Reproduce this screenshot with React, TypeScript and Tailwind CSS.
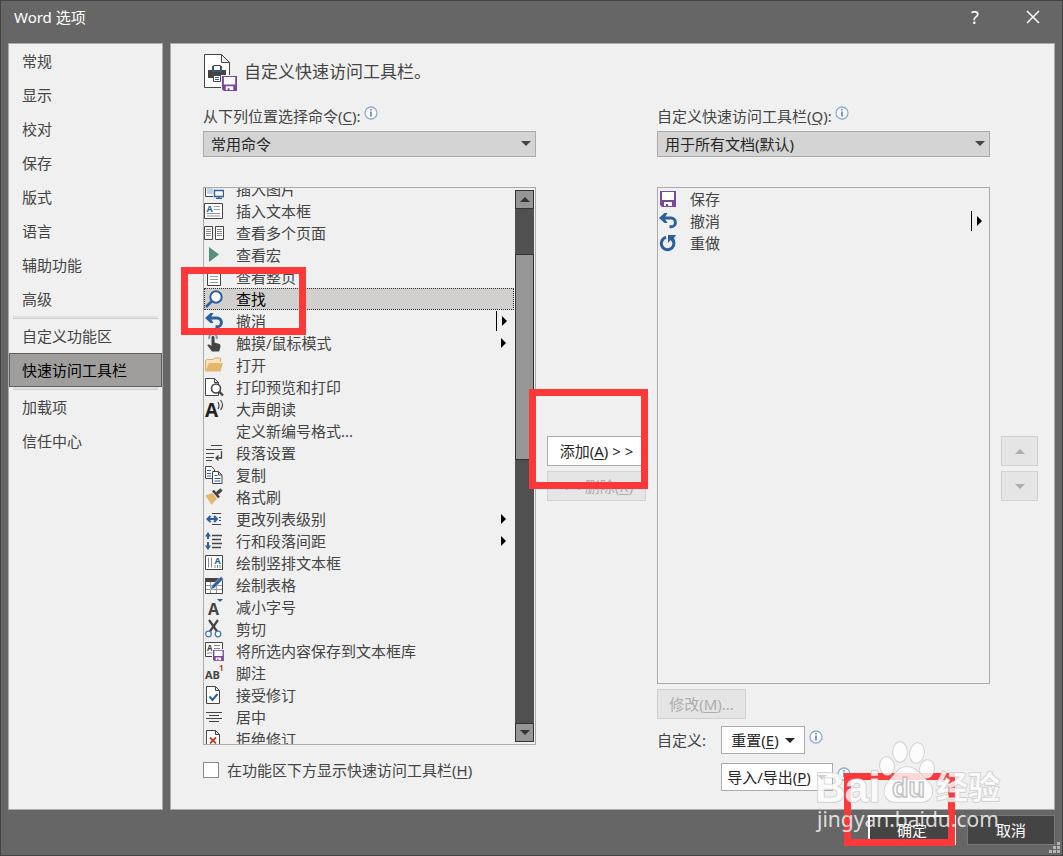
import React, { useState } from 'react';

const INK = '#444444';
const BLUE = '#2b5f9e';
const PURPLE = '#7b479d';

const Icon = ({ children }: { children?: React.ReactNode }) => (
  <svg width="20" height="20" viewBox="0 0 20 20" fill="none" className="shrink-0" aria-hidden="true">
    {children}
  </svg>
);

const Letter = ({ x, y, size, fill = INK, children }: { x: number; y: number; size: number; fill?: string; children: string }) => (
  <text x={x} y={y} fontSize={size} fontWeight="700" fill={fill} fontFamily="'Open Sans', sans-serif">{children}</text>
);

const Floppy = ({ transform }: { transform?: string }) => (
  <g transform={transform}>
    <path d="M0 0h16v16H2l-2-2z" fill={PURPLE} />
    <path d="M2 1h12v8H2zM4 11h8v4H4z" fill="#fff" />
    <path d="M6 13h2v2H6z" fill={PURPLE} />
  </g>
);

const Undo = () => (
  <>
    <path d="M4 7h9a4.300 4.300 0 0 1 0 8.800h-1.500" stroke={BLUE} strokeWidth="3" />
    <path d="M1 7l5.500-5h3L6.500 7l3 5h-3z" fill={BLUE} />
  </>
);

const Page = () => <path d="M3.5 1.5h9l4 4v13h-13z M12.5 1.5v4h4" fill="#fff" stroke={INK} />;

const icons: Record<string, React.ReactNode> = {
  picture: (
    <>
      <path d="M1.5 3.5h15v14H1.5z" fill="#fff" stroke={INK} />
      <path d="M3 5h6v10H3z" fill="#c3d3e8" />
      <path d="M9 9h11v11H9z" fill="#efefef" />
      <path d="M10.5 11.5h9v6h-9z" fill="#fff" stroke={BLUE} strokeWidth="1.4" />
      <path d="M15 17v2M12 19.5h6" stroke={BLUE} strokeWidth="1.4" />
    </>
  ),
  textbox: (
    <>
      <path d="M.5 2.5h18v15H.5z" fill="#fff" stroke={INK} />
      <Letter x={2.5} y={11} size={9} fill={BLUE}>A</Letter>
      <path d="M10 5.500h6M10 8.500h6M3 12.500h13M3 15h13" stroke="#999" />
    </>
  ),
  pages: (
    <>
      <path d="M.5 3.500h8v13H.500zM11.500 3.500h8v13h-8z" fill="#fff" stroke={INK} />
      <path d="M2 6.500h5M2 8.500h5M2 10.500h5M2 12.500h5M13 6.500h5M13 8.500h5M13 10.500h5M13 12.500h5" stroke="#888" />
    </>
  ),
  macro: <path d="M5 2l10 7.500-10 7.500z" fill="#569078" />,
  page: (
    <>
      <path d="M3.500 1.500h13v17h-13z" fill="#fff" stroke={INK} />
      <path d="M6 6.500h8M6 9.500h8M6 12.500h8M6 15.500h8" stroke="#999" />
    </>
  ),
  find: (
    <>
      <circle cx="12" cy="8" r="5.700" fill="#fff" stroke={BLUE} strokeWidth="2" />
      <path d="M8 12l-6 6" stroke={BLUE} strokeWidth="2.600" />
    </>
  ),
  undo: <Undo />,
  redo: (
    <>
      <path d="M8 4.300A6.300 6.300 0 1 0 15.200 7.500" stroke={BLUE} strokeWidth="3" />
      <path d="M10 2h8l-2 3 1 3-3 1-1.500-2-2.500 3z" fill={BLUE} />
    </>
  ),
  touch: (
    <>
      <path d="M5.500 6a3.800 3.800 0 1 1 7 0" stroke="#7d9fc6" strokeWidth="2" />
      <path d="M7.500 4.500c0-2 3-2 3 0v5l5 1.500c1.500.500 1 5-.5 7.500H8L3.500 12.500c0-1.500 2-1.500 4 .5z" fill={INK} />
    </>
  ),
  open: (
    <>
      <path d="M1.500 15.500v-10l2-1h6l1-1.500h6v4" fill="#f6e3bd" stroke="#dfae5f" />
      <path d="M5 8h14l-2.500 8.500H1z" fill="#e3b76e" />
    </>
  ),
  preview: (
    <>
      <path d="M1.500 1.500h9l4 4v13h-13z M10.500 1.500v4h4" fill="#fff" stroke={INK} />
      <circle cx="12" cy="11.500" r="4.500" fill="#fff" stroke={INK} strokeWidth="1.600" />
      <path d="M15 14.500l4 4" stroke={INK} strokeWidth="2.400" />
    </>
  ),
  speak: (
    <>
      <Letter x={1} y={18} size={19} fill="#222">A</Letter>
      <path d="M14 3q2 3.500 0 7M16.500 1q4 5 0 10" stroke={INK} strokeWidth="1.200" />
    </>
  ),
  paragraph: (
    <>
      <path d="M7 2.500h11M2 6.500h16M2 10.500h8M2 14.500h8M2 17.500h6" stroke={INK} />
      <path d="M17.500 8v7H12M14.500 12.500L12 15l2.500 2.500" stroke={INK} strokeWidth="1.300" />
    </>
  ),
  copy: (
    <>
      <path d="M1.500 1.500h6l3 3v9h-9z" fill="#fff" stroke={INK} />
      <path d="M3 5.500h4M3 8.500h4M3 11h4" stroke={BLUE} />
      <path d="M8.500 6.500h6l3.500 3.500v8.500H8.500z M14.500 6.500v3.500H18" fill="#fff" stroke={INK} />
      <path d="M10.500 10.500h3M10.500 13.500h6M10.500 16h6" stroke={BLUE} />
    </>
  ),
  painter: (
    <>
      <path d="M1.500 8.500l7-2.500 4.500 5.500L7.500 18z" fill="#e3b76e" />
      <path d="M9 3.500l6 7" stroke={INK} strokeWidth="2.600" />
      <path d="M13 6.500l4.500-4" stroke={INK} strokeWidth="3.400" />
    </>
  ),
  level: (
    <>
      <path d="M8 4.500h9M15 8.500h2M15 11.500h2M8 15.500h9" stroke={INK} strokeWidth="1.200" />
      <path d="M4 10h8" stroke={BLUE} strokeWidth="2" />
      <path d="M6.500 7L3.500 10l3 3M10 7l3 3-3 3" stroke={BLUE} strokeWidth="2" />
    </>
  ),
  spacing: (
    <>
      <path d="M8 4.500h10M8 8.500h9M8 12.500h10M8 16.500h9" stroke={INK} strokeWidth="1.300" />
      <path d="M4 2v6M4 11v7" stroke={BLUE} strokeWidth="2" />
      <path d="M1 5.500L4 1l3 4.500zM1 14.500L4 19l3-4.500z" fill={BLUE} />
    </>
  ),
  vertical: (
    <>
      <path d="M1.500 2.500h17v14h-17z" fill="#fff" stroke={INK} />
      <Letter x={10.5} y={11} size={9} fill={BLUE}>A</Letter>
      <path d="M4.500 4.500v10M7.500 4.500v10M11 12v3M13.500 12v3M16 12v3" stroke="#888" />
    </>
  ),
  table: (
    <>
      <path d="M1.500 3.500h17v15h-17z" fill="#fff" stroke={INK} />
      <path d="M1 3h14v4H1z" fill={INK} />
      <path d="M2 10.500h16M2 14.500h16M6.500 7v11M12.500 7v11" stroke="#999" />
      <path d="M6.500 14.500l1.500-4L17 1.500l2.500 2.500-9 9z" fill={BLUE} stroke="#efefef" strokeWidth=".6" />
    </>
  ),
  shrink: (
    <>
      <Letter x={4} y={18} size={16}>A</Letter>
      <path d="M13 2h6l-3 3z" fill={BLUE} />
    </>
  ),
  cut: (
    <>
      <path d="M5 1l8.500 12M14 1L5.500 13" stroke={INK} strokeWidth="2.200" />
      <circle cx="4.500" cy="15" r="2.800" fill="#fff" stroke="#4d78ad" strokeWidth="1.300" />
      <circle cx="14" cy="15" r="2.800" fill="#fff" stroke="#4d78ad" strokeWidth="1.300" />
    </>
  ),
  gallery: (
    <>
      <path d="M1.500 1.500h17v14h-17z" fill="#fff" stroke={INK} />
      <Letter x={3} y={10} size={8}>A</Letter>
      <path d="M10 4.500h6M10 7.500h6M3 12h6" stroke="#888" />
      <path d="M8 8h12v12H8z" fill="#efefef" />
      <Floppy transform="translate(9 9) scale(.68)" />
    </>
  ),
  footnote: (
    <>
      <Letter x={1} y={16} size={11}>AB</Letter>
      <Letter x={15} y={8} size={8} fill="#b8432c">1</Letter>
    </>
  ),
  accept: (
    <>
      <g transform="translate(-1)"><Page /></g>
      <path d="M5.500 11.500l3 3.500 5-6" stroke={BLUE} strokeWidth="2" />
    </>
  ),
  center: <path d="M2 5.500h16M5 8.500h10M2 11.500h16M5 14.500h10" stroke={INK} strokeWidth="1.200" />,
  reject: (
    <>
      <g transform="translate(-1)"><Page /></g>
      <path d="M6 8.500l6 6M12 8.500l-6 6" stroke="#b8432c" strokeWidth="1.800" />
    </>
  ),
  save: <Floppy transform="translate(2 2)" />,
};

type Command = { label: string; icon?: string; menu?: 'split' | 'sub' };

const commands: Command[] = [
  { label: '插入图片', icon: 'picture' },
  { label: '插入文本框', icon: 'textbox' },
  { label: '查看多个页面', icon: 'pages' },
  { label: '查看宏', icon: 'macro' },
  { label: '查看整页', icon: 'page' },
  { label: '查找', icon: 'find' },
  { label: '撤消', icon: 'undo', menu: 'split' },
  { label: '触摸/鼠标模式', icon: 'touch', menu: 'sub' },
  { label: '打开', icon: 'open' },
  { label: '打印预览和打印', icon: 'preview' },
  { label: '大声朗读', icon: 'speak' },
  { label: '定义新编号格式...' },
  { label: '段落设置', icon: 'paragraph' },
  { label: '复制', icon: 'copy' },
  { label: '格式刷', icon: 'painter' },
  { label: '更改列表级别', icon: 'level', menu: 'sub' },
  { label: '行和段落间距', icon: 'spacing', menu: 'sub' },
  { label: '绘制竖排文本框', icon: 'vertical' },
  { label: '绘制表格', icon: 'table' },
  { label: '减小字号', icon: 'shrink' },
  { label: '剪切', icon: 'cut' },
  { label: '将所选内容保存到文本框库', icon: 'gallery' },
  { label: '脚注', icon: 'footnote' },
  { label: '接受修订', icon: 'accept' },
  { label: '居中', icon: 'center' },
  { label: '拒绝修订', icon: 'reject' },
];

const toolbar: Command[] = [
  { label: '保存', icon: 'save' },
  { label: '撤消', icon: 'undo', menu: 'split' },
  { label: '重做', icon: 'redo' },
];

const sections = [
  ['常规', '显示', '校对', '保存', '版式', '语言', '辅助功能', '高级'],
  ['自定义功能区', '快速访问工具栏'],
  ['加载项', '信任中心'],
];

const CommandRow = ({ item, selected, onSelect }: { item: Command; selected?: boolean; onSelect?: () => void }) => (
  <li
    role="option"
    aria-selected={!!selected}
    onClick={onSelect}
    className={
      selected
        ? 'flex h-[22px] items-center gap-3 bg-[#d1d0ce] text-black outline-1 -outline-offset-1 outline-dotted outline-[#333333]'
        : 'flex h-[22px] items-center gap-3'
    }
  >
    <Icon>{item.icon && icons[item.icon]}</Icon>
    <span className="whitespace-nowrap">{item.label}</span>
    {item.menu && (
      <span className={item.menu === 'split' ? 'ml-auto flex items-center gap-[5px] pr-[7px]' : 'ml-auto pr-2'}>
        {item.menu === 'split' && <span className="h-5 w-px bg-black" />}
        <svg width="5" height="10" viewBox="0 0 5 10" aria-hidden="true"><path d="M0 0l5 5-5 5z" fill="#000" /></svg>
      </span>
    )}
  </li>
);

const Caret = ({ up, className }: { up?: boolean; className?: string }) => (
  <svg width="10" height="5" viewBox="0 0 10 5" className={className} fill="currentColor" aria-hidden="true">
    <path d={up ? 'M0 5l5-5 5 5z' : 'M0 0h10L5 5z'} />
  </svg>
);

const Info = () => (
  <svg width="14" height="14" viewBox="0 0 14 14" className="shrink-0" aria-hidden="true">
    <circle cx="7" cy="7" r="6" fill="#fafcff" stroke="#8fabd6" strokeWidth="1.3" />
    <path d="M7 3v1.500M7 5.500v5" stroke="#4a6fae" strokeWidth="1.400" />
  </svg>
);

const Key = ({ children }: { children: string }) => <span className="underline underline-offset-2">{children}</span>;

const Dropdown = ({ id, value }: { id: string; value: string }) => (
  <div className="relative">
    <select id={id} className="block h-[26px] w-full appearance-none border border-[#ababab] bg-[#d4d4d4] px-[7px] leading-6 text-[#262626]">
      <option>{value}</option>
    </select>
    <Caret className="pointer-events-none absolute top-[10px] right-[5px] text-[#444444]" />
  </div>
);

const disabledButton = 'flex h-[30px] items-center justify-center border border-[#d1d1d1] bg-[#e5e5e5] text-[#adadad]';

const Watermark = () => (
  <svg
    width="192"
    height="98"
    viewBox="0 0 192 98"
    className="pointer-events-none absolute right-[57px] bottom-[19px]"
    aria-label="Baidu经验 jingyan.baidu.com"
  >
    <g fill="#ffffff" fillOpacity=".8" stroke="#c4c4c4" strokeOpacity=".8" strokeWidth="1.500" paintOrder="stroke">
      <ellipse cx="74" cy="28" rx="7" ry="9" transform="rotate(-8 74 28)" />
      <ellipse cx="87" cy="14" rx="7" ry="10" />
      <ellipse cx="104" cy="15" rx="7" ry="10" transform="rotate(10 104 15)" />
      <ellipse cx="114" cy="31" rx="7" ry="9" transform="rotate(10 114 31)" />
      <path d="M94 29c-9 0-12 8-18 14-8 8-5 21 6 21h26c12 0 15-13 7-20-7-7-12-15-21-15z" />
      <text x="2" y="64" fontSize="42" fontWeight="700" fontFamily="'Liberation Sans', sans-serif">Bai</text>
      <text x="123" y="61" fontSize="32" fontWeight="700" fontFamily="'Noto Sans CJK SC', sans-serif">经验</text>
    </g>
    <text x="79" y="59" fontSize="27" fontWeight="700" fill="#f8f8f8" stroke="#c4c4c4" strokeWidth="1.500" fontFamily="'Liberation Sans', sans-serif">du</text>
    <text x="4" y="89" fontSize="21" fill="#ffffff" fillOpacity=".8" fontFamily="'Noto Sans', sans-serif">jingyan.baidu.com</text>
  </svg>
);

export default function App() {
  const [section, setSection] = useState('快速访问工具栏');
  const [selected, setSelected] = useState('查找');

  return (
    <div className="relative flex min-h-screen flex-col border border-[#434343] bg-[#666666] px-[7px] font-['Noto_Sans','Noto_Sans_CJK_SC',sans-serif] text-[15px] leading-5 text-[#444444]">
      <header className="flex h-[42px] items-start justify-between pt-[6px] pr-[15px] pl-[6px] text-white">
        <h1>Word 选项</h1>
        <div className="flex h-5 items-center gap-[45px]">
          <button type="button" aria-label="帮助" className="w-3 text-[18px] leading-5">?</button>
          <button type="button" aria-label="关闭">
            <svg width="14" height="14" viewBox="0 0 14 14" className="block" aria-hidden="true">
              <path d="M1 1l12 12M13 1L1 13" stroke="#fff" strokeWidth="1.500" />
            </svg>
          </button>
        </div>
      </header>

      <div className="flex flex-1 gap-[7px]">
        <nav className="w-[155px] shrink-0 border border-[#ababab] bg-[#f0f0f0]">
          {sections.map((group, i) => (
            <React.Fragment key={i}>
              {i > 0 && <hr className="mx-1 h-[3px] border-0 border-b border-[#cfcfcf] bg-[#e1e1e1]" />}
              {group.map((name) => (
                <button
                  key={name}
                  type="button"
                  onClick={() => setSection(name)}
                  className={
                    name === section
                      ? 'flex h-[34px] w-full items-center border border-[#5e5e5e] bg-[#9f9e9c] px-3 text-black'
                      : 'flex h-[34px] w-full items-center border border-transparent px-3'
                  }
                >
                  {name}
                </button>
              ))}
            </React.Fragment>
          ))}
        </nav>

        <main className="min-w-0 flex-1 border border-[#ababab] bg-[#f0f0f0] pt-[10px] pr-4 pl-8">
          <div className="flex h-[37px] items-center gap-[7px]">
            <svg width="34" height="37" viewBox="0 0 34 37" fill="none" aria-hidden="true">
              <path d="M1.500.500h17l8 8v25h-25z M18.500.500v8h8" fill="#fff" stroke={INK} />
              <path d="M5 16h18v8H5z" fill={INK} />
              <path d="M9 12h10v6H9z" fill={BLUE} />
              <path d="M10.500 11.500h7v5h-7z" fill="#fff" stroke={INK} />
              <path d="M10.500 21.500h7v6h-7z" fill="#fff" stroke={INK} />
              <path d="M12 23.500h4M12 25.500h4" stroke={BLUE} />
              <path d="M18 21h16v16H18z" fill="#f0f0f0" />
              <Floppy transform="translate(19 22) scale(.94)" />
            </svg>
            <h2 className="pb-[2px] text-[17px] leading-6">自定义快速访问工具栏。</h2>
          </div>

          <div className="flex pt-3">
            <section className="min-w-0 flex-1">
              <div className="flex h-7 gap-[3px] pt-[3px]">
                <label htmlFor="source">从下列位置选择命令(<Key>C</Key>):</label>
                <Info />
              </div>
              <Dropdown id="source" value="常用命令" />
              <div className="mt-[30px] flex h-[558px] border border-[#ababab]">
                <div className="min-w-0 flex-1 overflow-hidden">
                  <ul role="listbox" aria-label="命令" className="-mt-[10px]">
                    {commands.map((item) => (
                      <CommandRow
                        key={item.label}
                        item={item}
                        selected={item.label === selected}
                        onSelect={() => setSelected(item.label)}
                      />
                    ))}
                  </ul>
                </div>
                <div className="mx-px my-[2px] flex w-[19px] flex-col bg-[#505050]">
                  <button type="button" aria-label="向上滚动" className="flex h-[19px] items-center justify-center border border-[#333333] bg-[#969696] text-[#333333]">
                    <Caret up />
                  </button>
                  <div className="mt-[45px] h-[206px] border border-[#333333] bg-[#969696]" />
                  <button type="button" aria-label="向下滚动" className="mt-auto flex h-[19px] items-center justify-center border border-[#333333] bg-[#969696] text-[#333333]">
                    <Caret />
                  </button>
                </div>
              </div>
              <label className="mt-[15px] flex items-center gap-2">
                <input type="checkbox" className="h-4 w-4 appearance-none border border-[#8a8a8a] bg-white checked:bg-[#2b5f9e]" />
                <span>在功能区下方显示快速访问工具栏(<Key>H</Key>)</span>
              </label>
            </section>

            <div className="flex w-[121px] shrink-0 flex-col gap-[5px] px-[11px] pt-[333px]">
              <button type="button" className="h-[30px] border border-[#ababab] bg-white text-[#262626]">
                添加(<Key>A</Key>) &gt; &gt;
              </button>
              <button type="button" disabled className={disabledButton}>
                <span>&lt; &lt; 删除(<Key>R</Key>)</span>
              </button>
            </div>

            <section className="min-w-0 flex-1">
              <div className="flex h-7 gap-[3px] pt-[3px]">
                <label htmlFor="target">自定义快速访问工具栏(<Key>Q</Key>):</label>
                <Info />
              </div>
              <Dropdown id="target" value="用于所有文档(默认)" />
              <ul role="listbox" aria-label="快速访问工具栏" className="mt-[30px] h-[497px] border border-[#ababab]">
                {toolbar.map((item) => <CommandRow key={item.label} item={item} />)}
              </ul>
              <button type="button" disabled className={`${disabledButton} mt-[5px] w-[89px]`}>
                <span>修改(<Key>M</Key>)...</span>
              </button>
              <div className="mt-[7px] flex">
                <span className="w-16 shrink-0 pt-1">自定义:</span>
                <div className="flex flex-col gap-[9px]">
                  <div className="flex gap-1">
                    <button type="button" className="flex h-7 w-[84px] items-center justify-center gap-[6px] border border-[#ababab] bg-white text-[#262626]">
                      <span>重置(<Key>E</Key>)</span>
                      <Caret />
                    </button>
                    <span className="pt-1"><Info /></span>
                  </div>
                  <div className="flex gap-1">
                    <button type="button" className="flex h-7 w-28 items-center justify-center gap-[6px] border border-[#ababab] bg-white text-[#262626]">
                      <span className="whitespace-nowrap">导入/导出(<Key>P</Key>)</span>
                      <Caret />
                    </button>
                    <span className="pt-1"><Info /></span>
                  </div>
                </div>
              </div>
            </section>

            <div className="ml-[11px] flex w-[37px] shrink-0 flex-col gap-[5px] pt-[333px]">
              <button type="button" disabled aria-label="上移" className={disabledButton}><Caret up /></button>
              <button type="button" disabled aria-label="下移" className={disabledButton}><Caret /></button>
            </div>
          </div>
        </main>
      </div>

      <footer className="flex h-[45px] shrink-0 justify-end gap-[11px] pt-[5px] text-white">
        <button type="button" className="h-[30px] w-[88px] border-2 border-white bg-[#444444]">确定</button>
        <button type="button" className="h-[30px] w-[88px] border border-[#777777] bg-[#444444]">取消</button>
      </footer>

      <svg width="11" height="11" viewBox="0 0 11 11" className="absolute right-[2px] bottom-[2px]" aria-hidden="true">
        <path d="M8 0h3v3H8zM4 4h3v3H4zM8 4h3v3H8zM0 8h3v3H0zM4 8h3v3H4zM8 8h3v3H8z" fill="#b5b5b5" />
      </svg>

      {/* step highlights */}
      <div className="pointer-events-none absolute top-[266px] left-[180px] h-[68px] w-[125px] border-[7px] border-[#fd3838]" />
      <div className="pointer-events-none absolute top-[388px] left-[528px] h-[100px] w-[119px] border-[7px] border-[#fd3838]" />
      <div className="pointer-events-none absolute right-[107px] bottom-[9px] h-[73px] w-[111px] border-[7px] border-[#fd3838]" />
      <Watermark />
    </div>
  );
}
